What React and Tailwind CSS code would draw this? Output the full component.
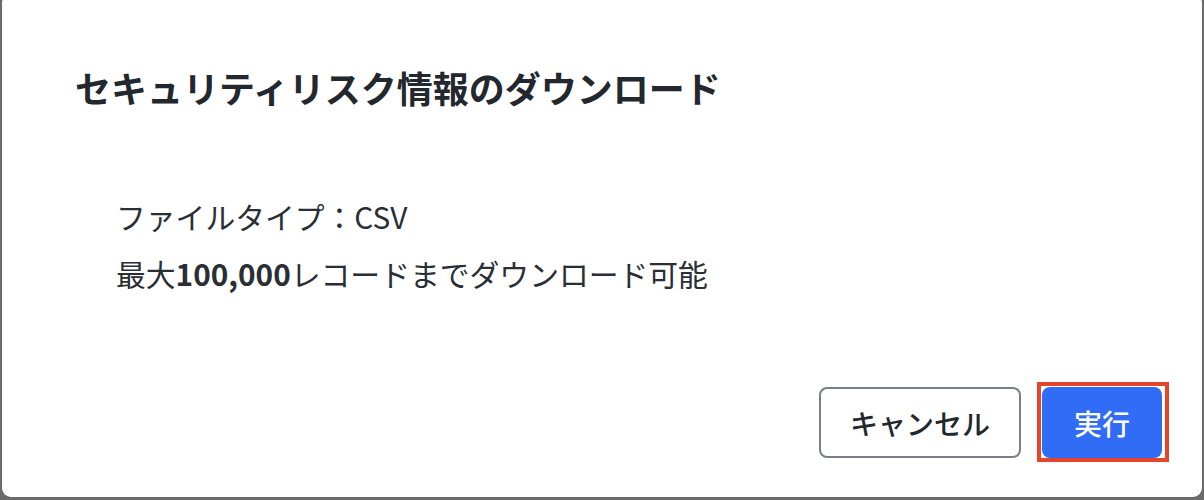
export default function App() {
  return (
    <div
      className="relative h-[500px] w-[1204px] overflow-hidden bg-[#6b6b6b] px-[2px]"
      style={{ fontFamily: '"Noto Sans CJK JP", "Noto Sans", sans-serif' }}
    >
      {/* dialog */}
      <div className="-mt-[6px] flex h-[503px] flex-col rounded-[9px] bg-white">
        <h2 className="pl-[73px] pt-[71px] text-[36px] font-semibold leading-[44px] text-[#23272e]">
          セキュリティリスク情報のダウンロード
        </h2>

        <div className="pl-[114px] pt-[79px] text-[29.8px] leading-[57px] text-[#2a2e35]">
          <p>ファイルタイプ：CSV</p>
          <p>
            最大<span className="font-bold">100,000</span>レコードまでダウンロード可能
          </p>
        </div>

        <div className="mt-auto flex justify-end gap-[21px] pb-[39px] pr-[40px]">
          <button className="h-[71px] w-[202px] rounded-[8px] border-2 border-[#7b7f87] bg-white text-[28px] font-medium text-[#23272e]">
            キャンセル
          </button>
          <button className="h-[71px] w-[120px] rounded-[8px] bg-[#306cf5] text-[28px] font-medium text-white">
            実行
          </button>
        </div>
      </div>

      {/* annotation highlight */}
      <div className="pointer-events-none absolute left-[1037px] top-[382px] h-[80px] w-[132px] border-4 border-[#e5452b]" />
    </div>
  );
}
